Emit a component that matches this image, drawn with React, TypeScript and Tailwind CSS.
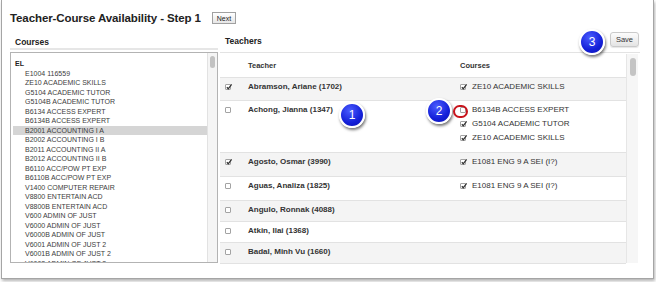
import React from "react";

const courses = [
  "E1004 116559",
  "ZE10 ACADEMIC SKILLS",
  "G5104 ACADEMIC TUTOR",
  "G5104B ACADEMIC TUTOR",
  "B6134 ACCESS EXPERT",
  "B6134B ACCESS EXPERT",
  "B2001 ACCOUNTING I A",
  "B2002 ACCOUNTING I B",
  "B2011 ACCOUNTING II A",
  "B2012 ACCOUNTING II B",
  "B6110 ACC/POW PT EXP",
  "B6110B ACC/POW PT EXP",
  "V1400 COMPUTER REPAIR",
  "V8800 ENTERTAIN ACD",
  "V8800B ENTERTAIN ACD",
  "V600 ADMIN OF JUST",
  "V6000 ADMIN OF JUST",
  "V6000B ADMIN OF JUST",
  "V6001 ADMIN OF JUST 2",
  "V6001B ADMIN OF JUST 2",
  "V6002 ADMIN OF JUST 3",
];

interface TeacherRow {
  name: string;
  checked: boolean;
  height: string;
  gray: boolean;
  courses: { label: string; checked: boolean }[];
}

const teachers: TeacherRow[] = [
  { name: "Abramson, Ariane (1702)", checked: true, height: "h-[23px]", gray: true, courses: [{ label: "ZE10 ACADEMIC SKILLS", checked: true }] },
  {
    name: "Achong, Jianna (1347)",
    checked: false,
    height: "h-[52px]",
    gray: false,
    courses: [
      { label: "B6134B ACCESS EXPERT", checked: false },
      { label: "G5104 ACADEMIC TUTOR", checked: true },
      { label: "ZE10 ACADEMIC SKILLS", checked: true },
    ],
  },
  { name: "Agosto, Osmar (3990)", checked: true, height: "h-[24px]", gray: true, courses: [{ label: "E1081 ENG 9 A SEI (I?)", checked: true }] },
  { name: "Aguas, Analiza (1825)", checked: false, height: "h-[24px]", gray: false, courses: [{ label: "E1081 ENG 9 A SEI (I?)", checked: true }] },
  { name: "Angulo, Ronnak (4088)", checked: false, height: "h-[21px]", gray: true, courses: [] },
  { name: "Atkin, Ilai (1368)", checked: false, height: "h-[21px]", gray: false, courses: [] },
  { name: "Badal, Minh Vu (1660)", checked: false, height: "h-[21px]", gray: true, courses: [] },
];

function Checkbox({ checked }: { checked: boolean }) {
  return (
    <span className="relative inline-block w-[6px] h-[6px] border border-[#a3a3a3] rounded-[1px] bg-white shrink-0">
      {checked && (
        <svg viewBox="0 0 8 8" className="absolute -left-[1px] -top-[2px] w-[8px] h-[8px]">
          <path d="M1.8 4.2 L3.3 5.8 L6.6 1.4" fill="none" stroke="#333" strokeWidth="1.3" />
        </svg>
      )}
    </span>
  );
}

function Badge({ n, className }: { n: string; className: string }) {
  return (
    <div
      className={`absolute w-[26px] h-[26px] rounded-full border-2 border-white bg-[radial-gradient(circle_at_40%_30%,#4a5cff,#1420d8_60%,#0a10b0)] shadow-[1px_2px_3px_rgba(0,0,0,0.55)] flex items-center justify-center text-white text-[12px] leading-none ${className}`}
    >
      {n}
    </div>
  );
}

export default function App() {
  return (
    <div className="w-[656px] h-[282px] bg-white font-['Liberation_Sans',Arial,sans-serif] text-[#333]">
      <div className="relative ml-[1px] w-[653px] h-[279px] border-x border-b border-[#a5a5a5] bg-white shadow-[1px_2px_3px_rgba(0,0,0,0.3)]">
        {/* Title */}
        <div className="flex items-center h-[28px] pl-[8px] pt-[7px]">
          <h1 className="text-[11.5px] leading-[16px] font-bold tracking-[-0.1px] text-[#222]">Teacher-Course Availability - Step 1</h1>
          <button className="ml-[11px] mt-[1px] w-[24px] h-[12px] border border-[#a0a0a0] bg-gradient-to-b from-white to-[#e6e6e6] text-[7px] leading-none text-[#222]">
            Next
          </button>
        </div>

        <div className="flex pl-[8px]">
          {/* Courses */}
          <div className="w-[208px]">
            <div className="h-[22px] pt-[9px] pl-[5px] text-[8.5px] leading-[10px] font-bold text-[#222] border-b-2 border-[#e6e6e6]">
              Courses
            </div>
            <div className="mt-[2px] h-[211px] border border-[#b3b3b3] flex overflow-hidden">
              <div className="flex-1 pt-[6px] pl-[2px] text-[7px] leading-[9.5px] text-[#3d3d3d]">
                <div className="pl-[2px] font-bold text-[#222]">EL</div>
                {courses.map((c, i) => (
                  <div key={i} className={`pl-[12px] whitespace-nowrap ${i === 6 ? "bg-[#d5d5d5]" : ""}`}>
                    {c}
                  </div>
                ))}
              </div>
              <div className="w-[10px] h-[209px] bg-[#f5f5f5] border-l border-[#e2e2e2] pt-[3px] flex justify-center">
                <div className="w-[5px] h-[12px] rounded-full bg-[#c2c2c2]" />
              </div>
            </div>
          </div>

          {/* Teachers */}
          <div className="ml-[2px] w-[420px]">
            <div className="h-[25px] flex items-center justify-between pl-[5px] border-b border-[#e3e3e3]">
              <span className="text-[8.5px] leading-[10px] font-bold text-[#222] mt-[2px]">Teachers</span>
              <button className="mr-[1px] mt-[-1px] w-[29px] h-[15px] rounded-[3px] border border-[#cacaca] bg-gradient-to-b from-[#fcfcfc] to-[#e4e4e4] shadow-[0_1px_1px_rgba(0,0,0,0.1)] text-[7.5px] leading-none text-[#333]">
                Save
              </button>
            </div>
            <div className="mt-[1px] h-[209px] flex">
              <div className="w-[406px]">
                <div className="h-[23px] flex items-center text-[7.5px] font-bold text-[#333]">
                  <span className="ml-[28px] w-[212px]">Teacher</span>
                  <span>Courses</span>
                </div>
                {teachers.map((t, i) => (
                  <div
                    key={i}
                    className={`${t.height} border-t border-[#e2e2e2] flex pt-[2px] leading-[14px] ${t.gray ? "bg-[#f4f4f4]" : "bg-white"}`}
                  >
                    <div className="w-[28px] pl-[5px] h-[14px] flex items-center">
                      <Checkbox checked={t.checked} />
                    </div>
                    <div className="w-[212px] text-[8px] font-bold text-[#333] whitespace-nowrap">{t.name}</div>
                    <div className="flex flex-col">
                      {t.courses.map((c, j) => (
                        <div key={j} className="flex items-center h-[14px]">
                          <Checkbox checked={c.checked} />
                          <span className="ml-[6px] text-[8px] text-[#333] whitespace-nowrap">{c.label}</span>
                        </div>
                      ))}
                    </div>
                  </div>
                ))}
                <div className="border-t border-[#e2e2e2]" />
              </div>
              <div className="w-[12px] bg-[#f6f6f6] border-l border-[#e6e6e6] pt-[4px] flex justify-center">
                <div className="w-[6px] h-[18px] rounded-full bg-[#c4c4c4]" />
              </div>
            </div>
          </div>
        </div>

        {/* Annotations */}
        <Badge n="1" className="left-[337px] top-[102px]" />
        <Badge n="2" className="left-[424px] top-[98px]" />
        <div className="absolute left-[451px] top-[105px] w-[15px] h-[13px] rounded-full border-[2.5px] border-[#c8141c]" />
        <Badge n="3" className="left-[577px] top-[29px]" />
      </div>
    </div>
  );
}
